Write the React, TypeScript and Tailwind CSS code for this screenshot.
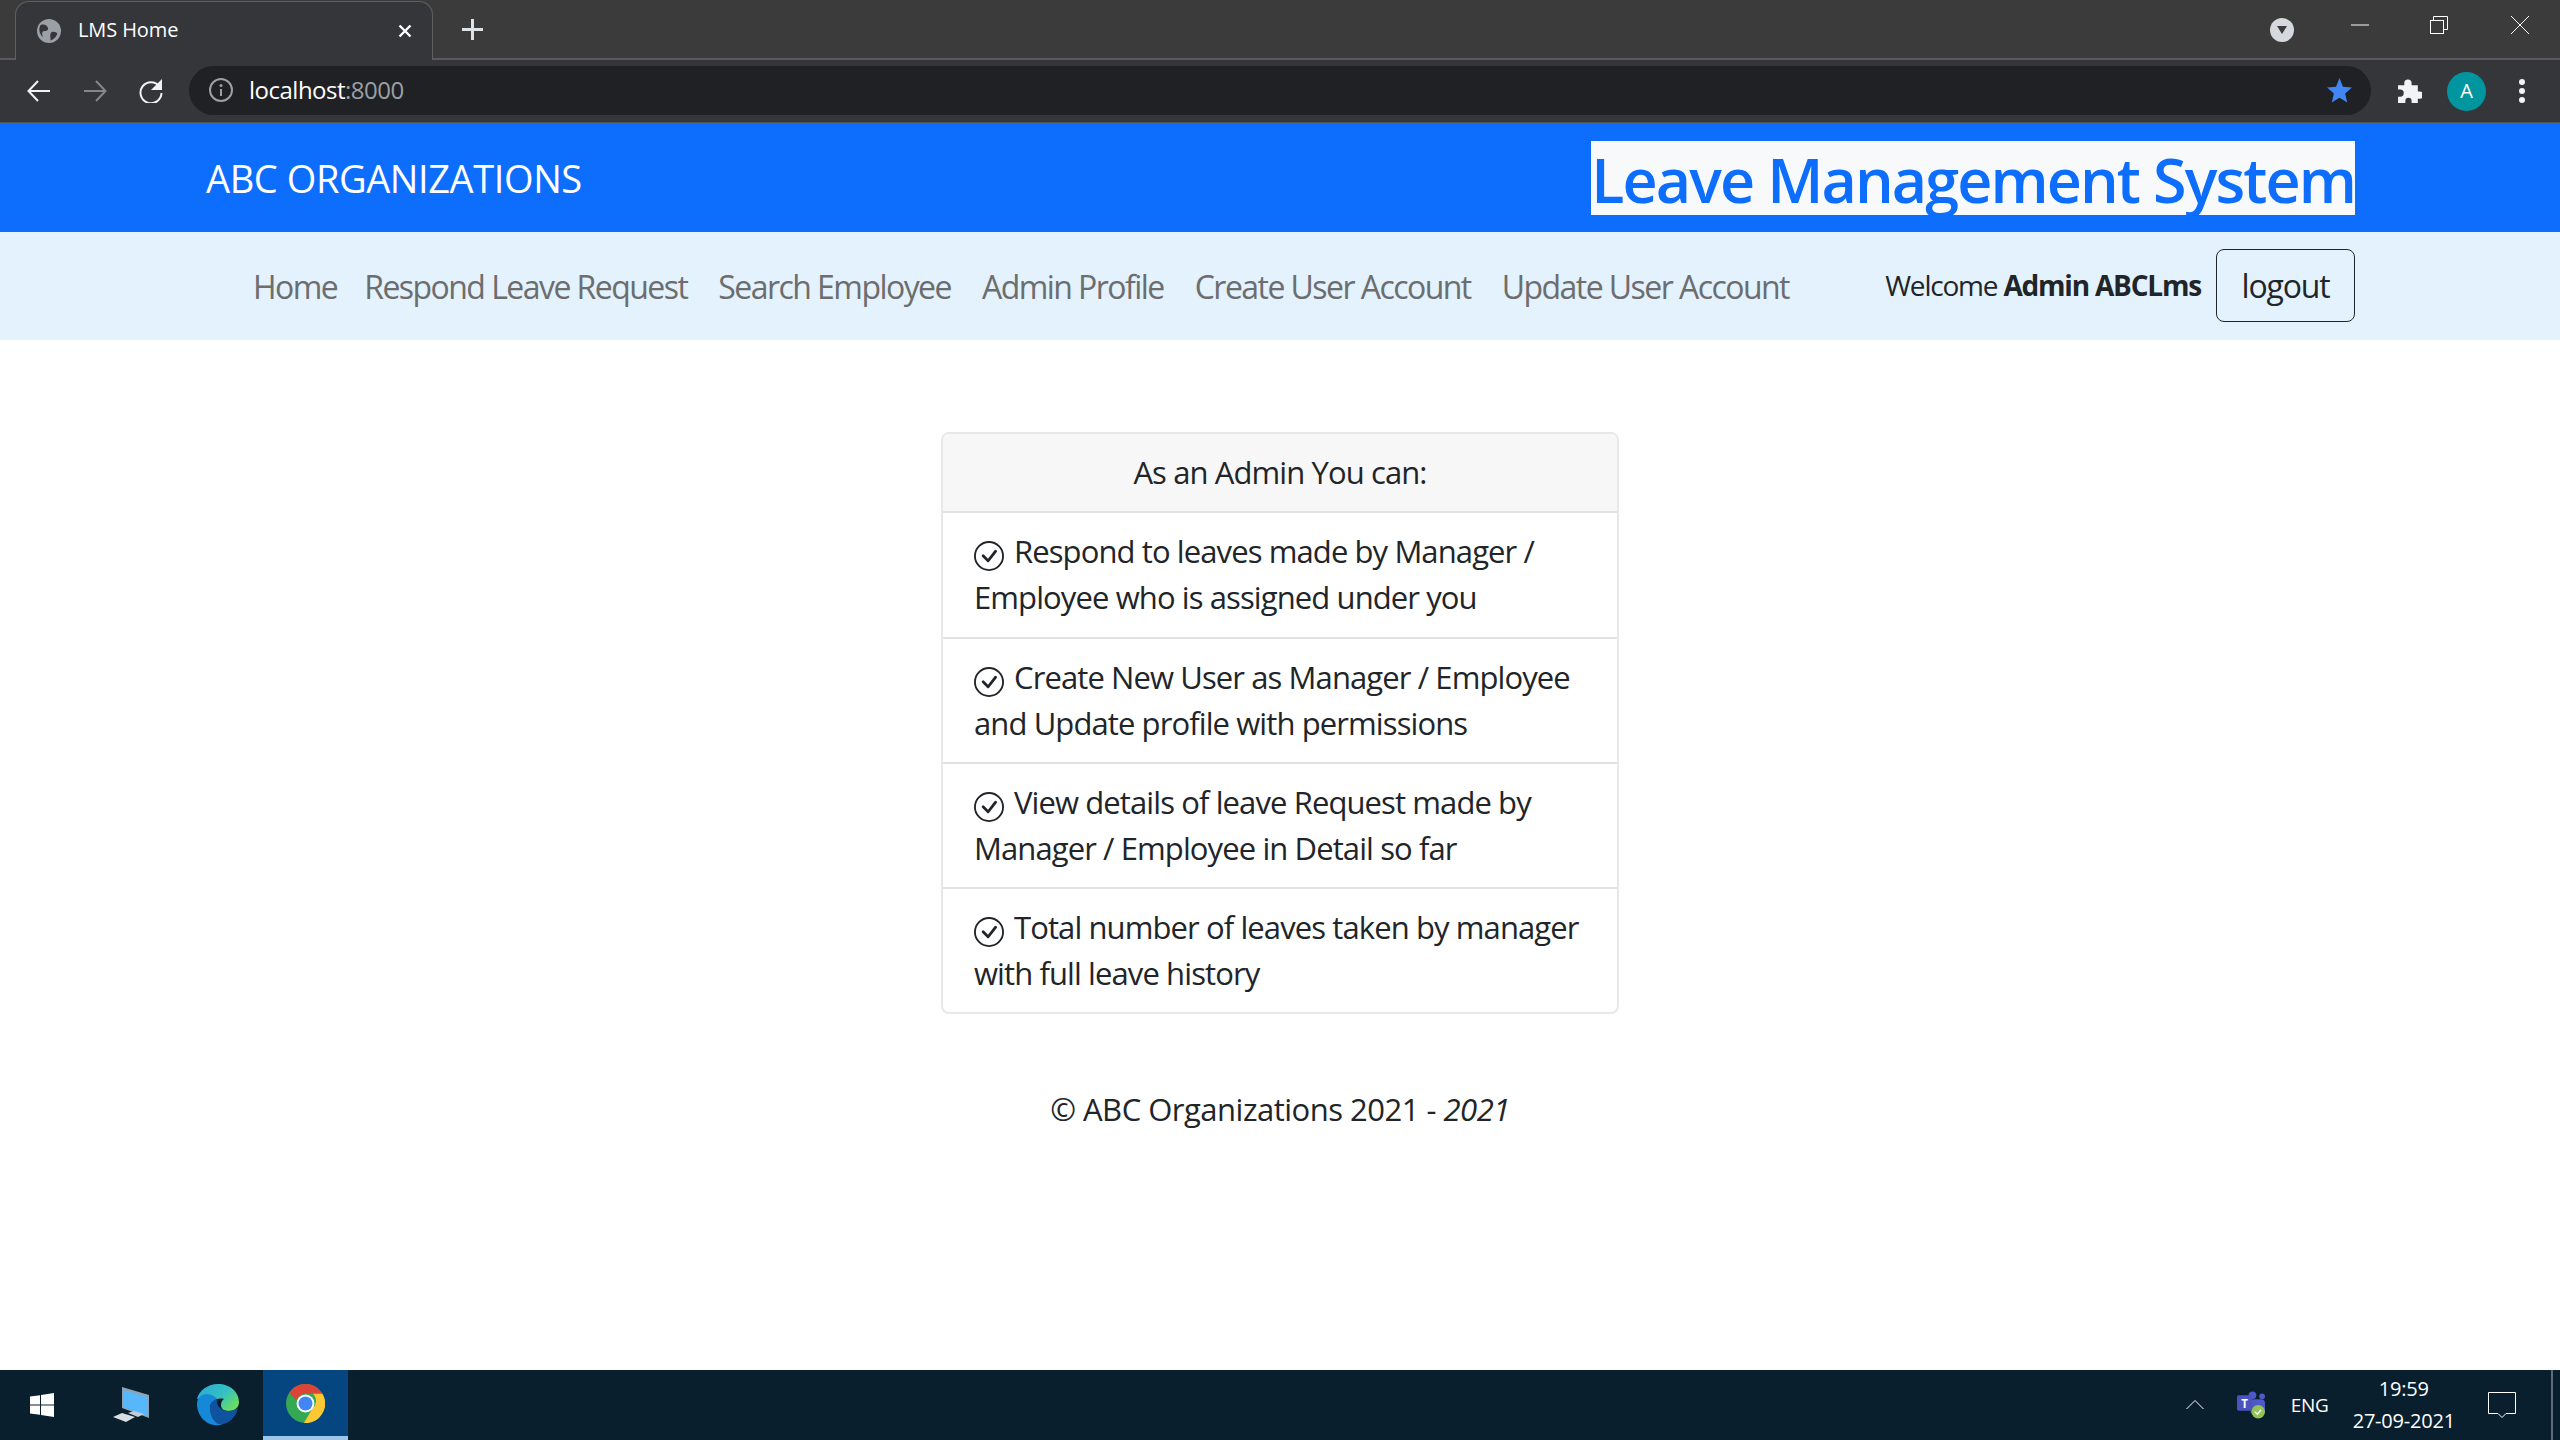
import React from "react";

const F = "font-['Open_Sans','Liberation_Sans',sans-serif]";

function Check() {
  return (
    <svg viewBox="0 0 16 16" className="inline-block w-[30px] h-[30px] align-[-8px] mr-[10px]" fill="#212529">
      <path d="M8 15A7 7 0 1 1 8 1a7 7 0 0 1 0 14zm0 1A8 8 0 1 0 8 0a8 8 0 0 0 0 16z" />
      <path d="M10.97 4.97a.235.235 0 0 0-.02.022L7.477 9.417 5.384 7.323a.75.75 0 0 0-1.06 1.06L6.97 11.03a.75.75 0 0 0 1.079-.02l3.992-4.99a.75.75 0 0 0-1.071-1.05z" />
    </svg>
  );
}

function Chrome({ size }: { size: number }) {
  return (
    <svg width={size} height={size} viewBox="0 0 48 48">
      <circle cx="24" cy="24" r="24" fill="#34a853" />
      <path d="M24 0a24 24 0 0 1 20.8 12H24a12 12 0 0 0-11.3 8L3.9 10.8A24 24 0 0 1 24 0z" fill="#db4437" />
      <path d="M44.8 12A24 24 0 0 1 22 48l10.6-18A12 12 0 0 0 33 12z" fill="#fcc934" />
      <circle cx="24" cy="24" r="11" fill="#fff" />
      <circle cx="24" cy="24" r="8.6" fill="#4285f4" />
    </svg>
  );
}

const items = [
  ["Respond to leaves made by Manager /", "Employee who is assigned under you"],
  ["Create New User as Manager / Employee", "and Update profile with permissions"],
  ["View details of leave Request made by", "Manager / Employee in Detail so far"],
  ["Total number of leaves taken by manager", "with full leave history"],
];

const nav = ["Home", "Respond Leave Request", "Search Employee", "Admin Profile", "Create User Account", "Update User Account"];

export default function App() {
  return (
    <div className={`${F} w-[2560px] h-[1440px] flex flex-col bg-white text-[#212529] overflow-hidden`}>
      {/* Tab strip */}
      <div className="h-[60px] bg-[#3b3b3b] flex items-stretch shrink-0 border-b-2 border-[#5a5a5a]">
        <div className="ml-[15px] w-[418px] h-[60px] mt-[1px] bg-[#35363a] rounded-t-[14px] border border-b-0 border-[#5f6063] flex items-center pl-[21px] pr-[20px] text-white">
          <svg width="24" height="24" viewBox="0 0 20 20" className="shrink-0 mb-[2px]">
            <circle cx="10" cy="10" r="10" fill="#9aa0a6" />
            <path d="M3 5c3-1 5 0 6 2s-1 3-3 3-2 3-1 5C2 13 1 8 3 5zM12 11c2-1 4 0 5 1-1 3-3 5-6 6 1-2-1-5 1-7z" fill="#35363a" />
          </svg>
          <span className="ml-[17px] text-[20px] tracking-[-0.1px] flex-1 mb-[3px]">LMS Home</span>
          <svg width="14" height="14" viewBox="0 0 14 14" stroke="#fff" strokeWidth="2.4" className="mb-[2px]"><path d="M1.5 1.5l11 11M12.5 1.5l-11 11" /></svg>
        </div>
        <div className="ml-[29px] flex items-center">
          <svg width="21" height="21" viewBox="0 0 21 21" stroke="#dee1e6" strokeWidth="3"><path d="M10.5 0v21M0 10.5h21" /></svg>
        </div>
        <div className="flex-1 flex items-center justify-end">
          <div className="w-[24px] h-[24px] rounded-full bg-[#d5d8dc] flex items-center justify-center mr-[57px] mt-[2px]">
            <svg width="12" height="10" viewBox="0 0 12 10" fill="#3b3b3b"><path d="M1 1h10L6 9z" /></svg>
          </div>
          <svg width="18" height="2" viewBox="0 0 18 2" className="mb-[8px]"><path d="M0 1h18" stroke="#fff" strokeWidth="1" /></svg>
          <svg width="18" height="18" viewBox="0 0 18 18" fill="none" stroke="#fff" className="ml-[61px] mb-[8px]"><rect x="0.5" y="4.5" width="13" height="13" /><path d="M3.5 4.5v-4h14v13h-4" /></svg>
          <svg width="18" height="18" viewBox="0 0 18 18" fill="none" stroke="#fff" className="ml-[63px] mr-[31px] mb-[8px]"><path d="M0 0l18 18M18 0L0 18" /></svg>
        </div>
      </div>

      {/* Toolbar */}
      <div className="h-[63px] bg-[#35363a] shrink-0 flex items-center border-b border-[#555]">
        <svg width="23" height="22" viewBox="0 0 23 22" fill="none" stroke="#f1f3f4" strokeWidth="2" className="ml-[27px]"><path d="M23 11H2M11 1L1.500 11 11 21" /></svg>
        <svg width="23" height="22" viewBox="0 0 23 22" fill="none" stroke="#85878a" strokeWidth="2" className="ml-[34px]"><path d="M0 11h21M12 1l9.500 10L12 21" /></svg>
        <svg width="24" height="24" viewBox="0 0 24 24" fill="none" className="ml-[32px]"><path d="M20.500 7.500A10.500 10.500 0 1 0 22.500 14" stroke="#f1f3f4" strokeWidth="2" /><path d="M23 0v11H12z" fill="#f1f3f4" /></svg>
        <div className="ml-[26px] w-[2182px] h-[49px] rounded-full bg-[#202124] flex items-center pl-[20px] pr-[19px] mt-[-2px]">
          <svg width="24" height="24" viewBox="0 0 24 24" fill="none"><circle cx="12" cy="12" r="11" stroke="#9aa0a6" strokeWidth="2" /><path d="M12 11v7" stroke="#9aa0a6" strokeWidth="2" /><circle cx="12" cy="7.500" r="1.500" fill="#9aa0a6" /></svg>
          <span className="ml-[16px] text-[24px] tracking-[-0.5px] text-white flex-1">localhost<span className="text-[#9aa0a6]">:8000</span></span>
          <svg width="25" height="25" viewBox="0 0 24 24" fill="#4285f4"><path d="M12 0l3.300 8.300 8.700.7-6.600 5.800 2 8.800L12 18.900 4.600 23.600l2-8.800L0 9l8.700-.7z" /></svg>
        </div>
        <svg width="25" height="25" viewBox="0 0 24 24" fill="#f1f3f4" className="ml-[26px]"><path d="M1 6h6V4a3.500 3.500 0 0 1 7 0v2h6v6h2a3.500 3.500 0 0 1 0 7h-2v4h-6v-2a3 3 0 0 0-6 0v2H1v-6h2a3.500 3.500 0 0 0 0-7H1z" /></svg>
        <div className="ml-[25px] w-[39px] h-[39px] rounded-full bg-[#00959f] flex items-center justify-center text-white text-[20px]">A</div>
        <div className="ml-[33px] flex flex-col gap-[3px]">
          <div className="w-[6px] h-[6px] rounded-full bg-[#f1f3f4]" />
          <div className="w-[6px] h-[6px] rounded-full bg-[#f1f3f4]" />
          <div className="w-[6px] h-[6px] rounded-full bg-[#f1f3f4]" />
        </div>
      </div>

      {/* Blue header */}
      <div className="h-[109px] bg-[#0d6efd] shrink-0 flex items-center justify-between pl-[206px] pr-[205px]">
        <span className="text-white text-[38px] tracking-[-0.4px] leading-none">ABC ORGANIZATIONS</span>
        <span className="bg-[#f8f9fa] text-[#0d6efd] text-[61px] tracking-[-1.9px] leading-[77px] h-[74px] font-semibold">Leave Management System</span>
      </div>

      {/* Nav */}
      <div className="h-[108px] bg-[#e3f2fd] shrink-0 flex items-center pl-[253px] pr-[205px]">
        <div className="flex gap-[31px] text-[32px] tracking-[-1.55px] text-[#6c6d6e] mt-[2px]">
          {nav.map((n) => <span key={n} className="first:mr-[-4px]">{n}</span>)}
        </div>
        <div className="ml-auto flex items-center mt-[-2px]">
          <span className="text-[28px] tracking-[-1.2px] mt-[-1px]">Welcome <b className="font-bold">Admin ABCLms</b></span>
          <div className="ml-[15px] w-[139px] h-[73px] rounded-[8px] border border-[#212529] flex items-center justify-center text-[32px] tracking-[-1.2px] pt-[2px]">logout</div>
        </div>
      </div>

      {/* Main */}
      <div className="flex-1 flex flex-col items-center pt-[92px]">
        <div className="w-[678px] rounded-[8px] border-2 border-[#e8e8e8] overflow-hidden text-[31px] leading-[46px] tracking-[-0.9px]">
          <div className="h-[79px] bg-[#f7f7f7] border-b-2 border-[#e2e2e2] flex items-center justify-center pb-[1px]">As an Admin You can:</div>
          {items.map((it, i) => (
            <div key={i} className={`pl-[31px] pt-[15px] ${i > 0 ? "h-[125px] border-t-2 border-[#e2e2e2]" : "h-[124px]"}`}>
              <div className="whitespace-nowrap"><Check />{it[0]}</div>
              <div className="whitespace-nowrap">{it[1]}</div>
            </div>
          ))}
        </div>
        <div className="mt-[72px] text-[31px] leading-[46px] tracking-[-0.5px]">© ABC Organizations 2021 - <i>2021</i></div>
      </div>

      {/* Taskbar */}
      <div className="h-[70px] bg-[#0a1f2e] shrink-0 flex items-center text-white relative">
        <svg width="24" height="24" viewBox="0 0 24 24" fill="#fff" className="ml-[30px]"><path d="M0 3.500l10-1.300v9.300H0zM11 2l13-2v11.500H11zM0 12.500h10v9.300L0 20.500zM11 12.500h13V24l-13-2z" /></svg>
        <svg width="36" height="36" viewBox="0 0 36 36" className="ml-[59px]">
          <path d="M9 0l27 8v23L9 21z" fill="#8fa2b5" />
          <path d="M10 3l24 7v19L10 20z" fill="#56b8fb" />
          <path d="M0 30l9-4 13 4-9 5z" fill="#d7dde2" />
          <path d="M15 26l6-2 10 3-6 3z" fill="#c4ccd3" />
        </svg>
        <svg width="42" height="42" viewBox="0 0 42 42" className="ml-[48px]">
          <defs>
            <linearGradient id="e1" x1="0" y1="0" x2="1" y2="0.700"><stop offset="0" stopColor="#2aa7d8" /><stop offset="0.600" stopColor="#35c1c1" /><stop offset="1" stopColor="#6ade5c" /></linearGradient>
          </defs>
          <path d="M21 0c12 0 21 8 21 18 0 6-5 9-10 9-6 0-8-3-8-6 0-4 3-6 3-6-8-2-14 3-15 9-2-7-5-11-12-9C2 7 10 0 21 0z" fill="url(#e1)" />
          <path d="M0 20c0-8 8-12 14-9 3 1 5 2 6 4-4 1-7 4-7 9 0 8 7 14 13 16-13 5-26-6-26-20z" fill="#1588d8" />
          <path d="M13 24c0-5 3-8 7-9-1 5 2 11 10 12 4 0 9-1 11-3-2 10-11 18-20 16-4-2-8-8-8-16z" fill="#0f52a0" />
        </svg>
        <div className="ml-[24px] w-[85px] h-[70px] bg-[#064680] flex items-center justify-center border-b-[4px] border-[#9cc6e8]">
          <Chrome size={39} />
        </div>
        <div className="ml-auto flex items-center h-full">
          <svg width="18" height="12" viewBox="0 0 18 12" fill="none" stroke="#fff"><path d="M0.500 10l8.500-8.500L17.500 10" /></svg>
          <svg width="28" height="28" viewBox="0 2 29 28" className="ml-[33px]">
            <circle cx="16" cy="6" r="4" fill="#5059c9" /><circle cx="26" cy="7" r="3" fill="#5059c9" />
            <rect x="14" y="10" width="15" height="16" rx="4" fill="#5059c9" />
            <rect x="0" y="6" width="16" height="16" rx="2" fill="#4b53bc" />
            <text x="8" y="19" textAnchor="middle" fontSize="12" fill="#fff" fontWeight="bold">T</text>
            <circle cx="22" cy="23" r="7" fill="#92c353" /><path d="M18.500 23l2.500 2.500 4-4.500" fill="none" stroke="#fff" strokeWidth="1.500" />
          </svg>
          <span className="ml-[26px] text-[19px] tracking-[-0.3px]">ENG</span>
          <div className="ml-[24px] flex flex-col items-center text-[20px] leading-[32px] tracking-[-0.2px]">
            <span>19:59</span>
            <span>27-09-2021</span>
          </div>
          <svg width="28" height="28" viewBox="0 0 28 28" fill="none" stroke="#fff" className="ml-[33px]"><path d="M0.500 1.500h27v21H18l-4 4-4-4H0.500z" /></svg>
          <div className="ml-[35px] mr-[7px] w-[2px] h-full bg-[#5d6c78]" />
        </div>
      </div>
    </div>
  );
}
